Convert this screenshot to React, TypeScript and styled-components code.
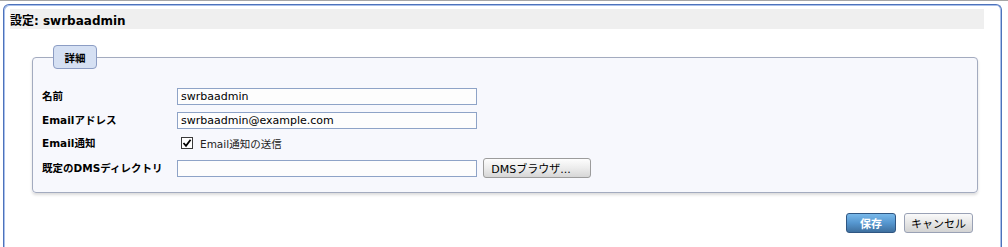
import styled, { createGlobalStyle } from "styled-components"

const GlobalStyle = createGlobalStyle`
    html, body {
        margin: 0;
        padding: 0;
        background: #ffffff;
        overflow: hidden;
    }
    body {
        font-family: "DejaVu Sans", "Noto Sans CJK JP", sans-serif;
        font-size: 11px;
        color: #000;
        border-top: 1px solid #a6a6a6;
    }
`

const Window = styled.div`
    box-sizing: border-box;
    margin: 3px 0 0 3px;
    width: 999px;
    height: 243px;
    border: 1px solid #4d72bb;
    border-bottom: none;
    border-radius: 6px 6px 0 0;
    box-shadow: inset 1px 1px 0 #a9c0ea, inset -1px 0 0 #a9c0ea;
    padding: 4px 17px 0 6px;
    background: #fff;
`

const TitleBar = styled.div`
    height: 20px;
    background: #efefef;
    display: flex;
    align-items: center;
    font-weight: bold;
    font-size: 12px;
    padding-top: 1px;
    box-sizing: border-box;
`

const Fieldset = styled.fieldset`
    margin: 16px 6px 0 22px;
    padding: 15px 10px 10px 9px;
    min-width: 0;
    border: 1px solid #a3abbf;
    border-radius: 4px;
    background: #f7f8fd;
    box-shadow: 0 2px 3px rgba(0, 0, 0, 0.14);
`

const Legend = styled.legend`
    box-sizing: border-box;
    margin-left: 11px;
    padding: 0;
    width: 44px;
    height: 24px;
    border: 1px solid #8c9dc4;
    border-radius: 4px;
    background: #d5e0f3;
    display: flex;
    align-items: center;
    justify-content: center;
    font-weight: bold;
    font-size: 10.5px;
`

const Form = styled.div`
    display: grid;
    grid-template-columns: 135px 1fr;
`

const Row = styled.div<{ $height: number }>`
    display: contents;
    & > * {
        height: ${({ $height }) => $height}px;
    }
`

const Label = styled.div`
    display: flex;
    align-items: center;
    font-weight: bold;
    font-size: 10.5px;
    padding-bottom: 2px;
    box-sizing: border-box;
`

const Field = styled.div`
    display: flex;
    align-items: center;
    gap: 6px;
`

const TextInput = styled.input`
    box-sizing: border-box;
    width: 300px;
    height: 17px;
    margin: 0;
    padding: 0 3px;
    border: 1px solid #8ea3c7;
    background: #fdfdfd;
    font-family: "DejaVu Sans", "Noto Sans CJK JP", sans-serif;
    font-size: 11px;
    color: #000;
    outline: none;
`

const CheckLabel = styled.label`
    display: flex;
    align-items: center;
    gap: 7px;
    margin-left: 4px;
    font-size: 10.5px;
    color: #222;
`

const CheckBox = styled.span`
    box-sizing: border-box;
    width: 12px;
    height: 12px;
    border: 1px solid #3a3a3a;
    background: #fff;
    display: flex;
    align-items: center;
    justify-content: center;
`

const Button = styled.button<{ $primary?: boolean; $width: number }>`
    box-sizing: border-box;
    width: ${({ $width }) => $width}px;
    height: 20px;
    margin: 0;
    padding: 0;
    white-space: nowrap;
    border-radius: 3px;
    font-family: "DejaVu Sans", "Noto Sans CJK JP", sans-serif;
    font-size: 11px;
    cursor: pointer;
    border: 1px solid ${({ $primary }) => ($primary ? "#2f5682" : "#99a1b5")};
    background: ${({ $primary }) =>
        $primary
            ? "linear-gradient(#79b9ea, #5596cf 50%, #3f709e)"
            : "linear-gradient(#fafafa, #e6e6e6 50%, #d3d3d3)"};
    color: ${({ $primary }) => ($primary ? "#fff" : "#000")};
    font-weight: ${({ $primary }) => ($primary ? "bold" : "normal")};
`

const BrowseButton = styled(Button)`
    padding-right: 12px;
    border-color: #9c9c9c;
    background: linear-gradient(#fdfdfd, #ececec 50%, #d6d6d6);
`

const Actions = styled.div`
    display: flex;
    justify-content: flex-end;
    gap: 8px;
    margin-top: 20px;
    padding-right: 11px;
`

const Check = () => (
    <svg width="10" height="10" viewBox="0 0 10 10">
        <path d="M1.5 5 L4 7.8 L8.6 1.8" fill="none" stroke="#000" strokeWidth="1.8" />
    </svg>
)

export default function App() {
    return (
        <>
            <GlobalStyle />
            <Window>
                <TitleBar>設定: swrbaadmin</TitleBar>
                <Fieldset>
                    <Legend>詳細</Legend>
                    <Form>
                        <Row $height={24}>
                            <Label>名前</Label>
                            <Field>
                                <TextInput defaultValue="swrbaadmin" />
                            </Field>
                        </Row>
                        <Row $height={24}>
                            <Label>Emailアドレス</Label>
                            <Field>
                                <TextInput defaultValue="swrbaadmin@example.com" />
                            </Field>
                        </Row>
                        <Row $height={22}>
                            <Label>Email通知</Label>
                            <Field>
                                <CheckLabel>
                                    <CheckBox>
                                        <Check />
                                    </CheckBox>
                                    Email通知の送信
                                </CheckLabel>
                            </Field>
                        </Row>
                        <Row $height={28}>
                            <Label>既定のDMSディレクトリ</Label>
                            <Field>
                                <TextInput defaultValue="" />
                                <BrowseButton $width={108}>DMSブラウザ...</BrowseButton>
                            </Field>
                        </Row>
                    </Form>
                </Fieldset>
                <Actions>
                    <Button $primary $width={50}>保存</Button>
                    <Button $width={69}>キャンセル</Button>
                </Actions>
            </Window>
        </>
    )
}
